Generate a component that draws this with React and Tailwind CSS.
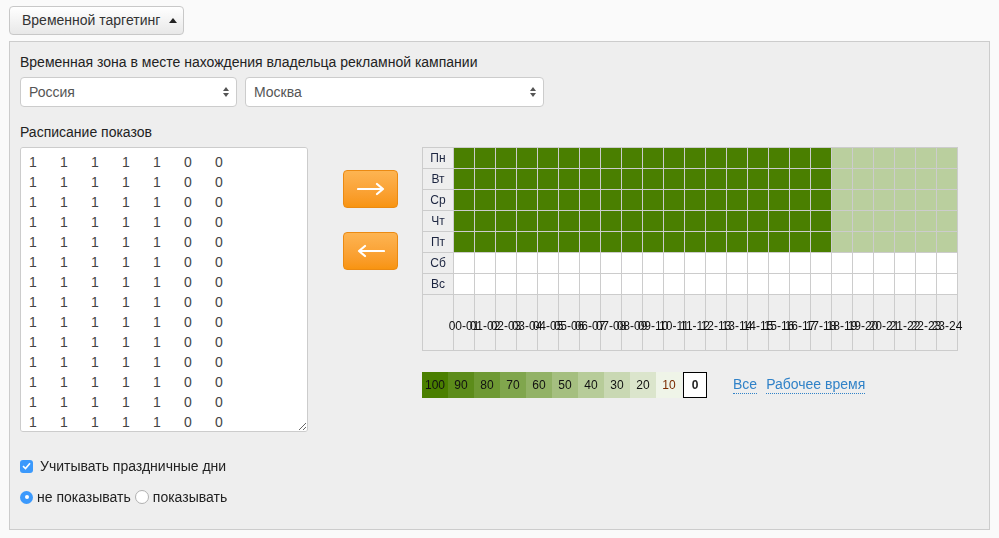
import { useState } from "react";

const DAYS = ["Пн", "Вт", "Ср", "Чт", "Пт", "Сб", "Вс"];
const HOURS = Array.from({ length: 24 }, (_, h) => h);
const LEGEND = [
  { v: 100, bg: "bg-[#4a7f00]" },
  { v: 90, bg: "bg-[#5c8c1a]" },
  { v: 80, bg: "bg-[#6e9933]" },
  { v: 70, bg: "bg-[#80a64d]" },
  { v: 60, bg: "bg-[#92b266]" },
  { v: 50, bg: "bg-[#a5bf80]" },
  { v: 40, bg: "bg-[#b7cc99]" },
  { v: 30, bg: "bg-[#c9d8b3]" },
  { v: 20, bg: "bg-[#dbe5cc]" },
  { v: 10, bg: "bg-[#eff4e8]", text: "text-[#7a2a00]" },
];

const pad = (n) => String(n).padStart(2, "0");

function cellClass(day, hour) {
  if (day > 4) return "bg-white";
  return hour < 18 ? "bg-[#4a7f00]" : "bg-[#bacf9e]";
}

function SelectBox({ value, width }) {
  return (
    <div className={`relative ${width}`}>
      <select
        defaultValue={value}
        className="h-[30px] w-full appearance-none rounded-[4px] border border-[#cccccc] bg-white pl-2 pr-6 text-[14px] text-[#555555] outline-none"
      >
        <option>{value}</option>
      </select>
      <svg
        className="pointer-events-none absolute right-[8px] top-[10px]"
        width="6"
        height="10"
        viewBox="0 0 6 10"
      >
        <path d="M3 0 L6 4 L0 4 Z" fill="#555" />
        <path d="M0 6 L6 6 L3 10 Z" fill="#555" />
      </svg>
    </div>
  );
}

function ArrowButton({ dir }) {
  return (
    <button className="flex h-[38px] w-[55px] items-center justify-center rounded-[4px] border border-[#eb8a12] bg-gradient-to-b from-[#fdb451] to-[#f8940f]">
      <svg width="28" height="14" viewBox="0 0 28 14">
        {dir === "right" ? (
          <path
            d="M1 7 H26 M20 2 L26 7 L20 12"
            stroke="white"
            strokeWidth="2.2"
            fill="none"
            strokeLinecap="round"
            strokeLinejoin="round"
          />
        ) : (
          <path
            d="M27 7 H2 M8 2 L2 7 L8 12"
            stroke="white"
            strokeWidth="2.2"
            fill="none"
            strokeLinecap="round"
            strokeLinejoin="round"
          />
        )}
      </svg>
    </button>
  );
}

export default function App() {
  const [holidays, setHolidays] = useState(true);
  const [show, setShow] = useState(false);
  const schedule = Array.from({ length: 14 }, () => "1\t1\t1\t1\t1\t0\t0").join("\n");

  return (
    <div className="min-h-[538px] bg-[#fafafa] px-[9px] pt-[6px] font-['Liberation_Sans',Arial,sans-serif] text-[14px] text-[#222222]">
      <button className="flex h-[29px] w-[175px] items-center rounded-[4px] border border-[#c8c8c8] bg-gradient-to-b from-white to-[#e8e8e8] pl-[12px] text-[14px] text-[#333333]">
        Временной таргетинг
        <svg className="ml-[9px]" width="8" height="5" viewBox="0 0 8 5">
          <path d="M4 0 L8 5 L0 5 Z" fill="#222" />
        </svg>
      </button>

      <div className="mt-[6px] h-[489px] w-[981px] border border-[#cccccc] bg-[#eeeeee] px-[10px] pt-[10px]">
        <div className="leading-[20px]">Временная зона в месте нахождения владельца рекламной кампании</div>
        <div className="mt-[5px] flex gap-[8px]">
          <SelectBox value="Россия" width="w-[217px]" />
          <SelectBox value="Москва" width="w-[299px]" />
        </div>

        <div className="mt-[15px] leading-[20px]">Расписание показов</div>
        <div className="mt-[5px] flex items-start">
          <textarea
            readOnly
            value={schedule}
            className="h-[285px] w-[288px] rounded-[3px] border border-[#cccccc] bg-white px-[8px] py-[4px] text-[14px] leading-[20px] text-[#444444] outline-none [tab-size:31px]"
          />

          <div className="ml-[35px] mt-[23px] flex flex-col gap-[24px]">
            <ArrowButton dir="right" />
            <ArrowButton dir="left" />
          </div>

          <div className="ml-[24px]">
            <div className="grid w-max grid-cols-[30px_repeat(24,20px)] grid-rows-[repeat(7,20px)_55px] gap-px border border-[#cccccc] bg-[#cccccc]">
              {DAYS.map((d, di) => [
                <div
                  key={d}
                  className="flex items-center justify-center bg-[#eeeeee] text-[12px] text-[#1c2540]"
                >
                  {d}
                </div>,
                ...HOURS.map((h) => <div key={`${d}-${h}`} className={cellClass(di, h)} />),
              ])}
              <div className="bg-[#eeeeee]" />
              {HOURS.map((h) => (
                <div key={h} className="flex items-center justify-center bg-[#eeeeee] pt-[6px]">
                  <span className="relative z-10 whitespace-nowrap text-[12px] text-[#111111]">
                    {pad(h)}-{pad(h + 1)}
                  </span>
                </div>
              ))}
            </div>

            <div className="mt-[21px] flex items-center">
              {LEGEND.map((l) => (
                <div
                  key={l.v}
                  className={`flex h-[26px] w-[26px] items-center justify-center text-[12px] ${l.bg} ${l.text || "text-[#111111]"}`}
                >
                  {l.v}
                </div>
              ))}
              <div className="ml-px flex h-[26px] w-[24px] items-center justify-center border border-black bg-white text-[12px] font-bold">
                0
              </div>
              <a className="ml-[26px] cursor-pointer border-b border-dotted border-[#3082c8] leading-[17px] text-[#3082c8]">
                Все
              </a>
              <a className="ml-[9px] cursor-pointer border-b border-dotted border-[#3082c8] leading-[17px] text-[#3082c8]">
                Рабочее время
              </a>
            </div>
          </div>
        </div>

        <label className="mt-[24px] flex items-center leading-[20px]" onClick={() => setHolidays(!holidays)}>
          <span
            className={`flex h-[13px] w-[13px] items-center justify-center rounded-[3px] ${
              holidays ? "bg-[#3b99fc]" : "border border-[#aaaaaa] bg-white"
            }`}
          >
            {holidays && (
              <svg width="9" height="8" viewBox="0 0 9 8">
                <path d="M1 4.2 L3.5 6.5 L8 1.2" stroke="white" strokeWidth="1.6" fill="none" />
              </svg>
            )}
          </span>
          <span className="ml-[7px]">Учитывать праздничные дни</span>
        </label>

        <div className="mt-[11px] flex items-center leading-[20px]">
          <span className="flex cursor-pointer items-center" onClick={() => setShow(false)}>
            <span
              className={`flex h-[13px] w-[13px] items-center justify-center rounded-full ${
                !show ? "bg-[#3b99fc]" : "border border-[#aaaaaa] bg-white"
              }`}
            >
              {!show && <span className="h-[4px] w-[4px] rounded-full bg-white" />}
            </span>
            <span className="ml-[4px]">не показывать</span>
          </span>
          <span className="ml-[4px] flex cursor-pointer items-center" onClick={() => setShow(true)}>
            <span
              className={`flex h-[14px] w-[14px] items-center justify-center rounded-full ${
                show ? "bg-[#3b99fc]" : "border border-[#b0b0b0] bg-white"
              }`}
            >
              {show && <span className="h-[4px] w-[4px] rounded-full bg-white" />}
            </span>
            <span className="ml-[4px]">показывать</span>
          </span>
        </div>
      </div>
    </div>
  );
}
